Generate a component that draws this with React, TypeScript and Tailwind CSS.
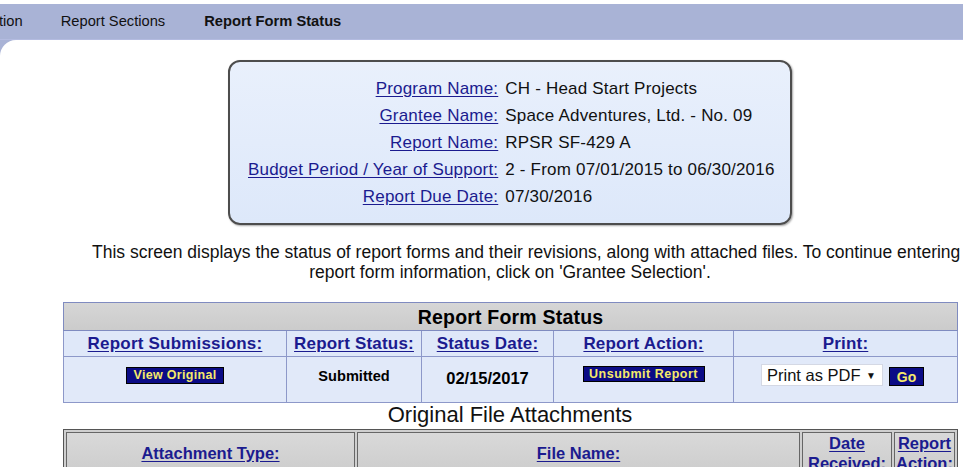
import React from "react";

const linkCls = "text-[#1b1b8f] underline underline-offset-2";

function NavyBtn({ children, className = "" }: { children: React.ReactNode; className?: string }) {
  return (
    <span
      className={
        "flex items-center justify-center bg-[#0b0b86] border border-black text-[#f5e96a] font-bold leading-none " +
        className
      }
    >
      {children}
    </span>
  );
}

export default function App() {
  const info: [string, string][] = [
    ["Program Name:", "CH - Head Start Projects"],
    ["Grantee Name:", "Space Adventures, Ltd. - No. 09"],
    ["Report Name:", "RPSR SF-429 A"],
    ["Budget Period / Year of Support:", "2 - From 07/01/2015 to 06/30/2016"],
    ["Report Due Date:", "07/30/2016"],
  ];

  return (
    <div
      className="w-[963px] h-[467px] overflow-hidden bg-white text-black"
      style={{ fontFamily: '"Liberation Sans", Arial, sans-serif' }}
    >
      <div className="h-[4px] bg-white" />
      <div className="bg-[#a9b3d6]">
        <div className="h-[36px] flex items-center text-[14.7px] text-[#111] border-b border-[#b3bbe0]">
          <span className="ml-[-1px]">tion</span>
          <span className="ml-[38px]">Report Sections</span>
          <span className="ml-[39px] font-bold">Report Form Status</span>
        </div>
        <div className="bg-white rounded-tl-[16px] h-[427px] pt-[20px]">
          {/* Info box */}
          <div className="ml-[228px] w-[564px] h-[165px] border-2 border-[#4d4d4d] rounded-[12px] bg-gradient-to-b from-[#e9f0fc] to-[#dde8fa] shadow-[1px_1px_2px_rgba(0,0,0,0.35)] pt-[13px] pl-[18px]">
            <div className="grid grid-cols-[auto_auto] justify-start gap-x-[7px] text-[17px] tracking-[0.2px]">
              {info.map(([l, v]) => (
                <React.Fragment key={l}>
                  <div className={"h-[27px] leading-[27px] text-right whitespace-nowrap " + linkCls}>{l}</div>
                  <div className="h-[27px] leading-[27px] text-[#111] whitespace-nowrap">{v}</div>
                </React.Fragment>
              ))}
            </div>
          </div>

          {/* Description */}
          <div className="mt-[17px] w-[900px] ml-[60px] text-[17.5px] leading-[20px] text-[#111]">
            <div className="pl-[32px] text-center whitespace-nowrap">
              This screen displays the status of report forms and their revisions, along with attached files. To continue entering
            </div>
            <div className="text-center whitespace-nowrap">report form information, click on 'Grantee Selection'.</div>
          </div>

          {/* Report Form Status table */}
          <table className="mt-[20px] ml-[63px] w-[895px] table-fixed border-collapse border border-[#7f8bc0]">
            <colgroup>
              <col className="w-[223px]" />
              <col className="w-[135px]" />
              <col className="w-[132px]" />
              <col className="w-[180px]" />
              <col />
            </colgroup>
            <tbody>
              <tr className="h-[28px] bg-gradient-to-b from-[#d6d6d6] to-[#cbcbcb]">
                <td colSpan={5} className="text-center font-bold text-[19.5px] tracking-[0.2px] leading-[24px] border border-[#7f8bc0]">
                  Report Form Status
                </td>
              </tr>
              <tr className="h-[26px] bg-[#dfe8f9]">
                {["Report Submissions:", "Report Status:", "Status Date:", "Report Action:", "Print:"].map((h) => (
                  <td
                    key={h}
                    className={"text-center font-bold text-[17px] tracking-[0.2px] leading-[22px] border border-[#8d98c9] whitespace-nowrap " + linkCls}
                  >
                    {h}
                  </td>
                ))}
              </tr>
              <tr className="h-[46px] bg-[#e1e9f9]">
                <td className="text-center border border-[#8d98c9] align-top pt-[10px]">
                  <NavyBtn className="mx-auto w-[98px] h-[17px] text-[12.5px] tracking-[0.3px]">View Original</NavyBtn>
                </td>
                <td className="text-center border border-[#8d98c9] font-bold text-[14.6px] leading-[17px] align-top pt-[11px]">
                  Submitted
                </td>
                <td className="text-center border border-[#8d98c9] font-bold text-[16.5px] leading-[19px] align-top pt-[12px]">
                  02/15/2017
                </td>
                <td className="text-center border border-[#8d98c9] align-top pt-[9px]">
                  <NavyBtn className="mx-auto w-[122px] h-[16px] text-[12.5px] tracking-[0.5px]">Unsubmit Report</NavyBtn>
                </td>
                <td className="border border-[#8d98c9] align-top pt-[7px]">
                  <div className="flex items-start justify-start pl-[27px] gap-[6px]">
                    <div className="w-[122px] h-[22px] bg-white border border-[#d4d8e4] flex items-center justify-between pl-[5px] pr-[6px] text-[16.5px] text-[#111]">
                      <span>Print as PDF</span>
                      <span className="text-[10px]">▼</span>
                    </div>
                    <NavyBtn className="w-[35px] h-[19px] text-[14px] mt-[3px]">Go</NavyBtn>
                  </div>
                </td>
              </tr>
            </tbody>
          </table>

          <div className="w-[963px] pl-[57px] text-center text-[22px] leading-[24px] text-[#111] whitespace-nowrap">
            Original File Attachments
          </div>

          {/* Attachments table */}
          <table className="mt-[2px] ml-[63px] w-[895px] table-fixed border-separate border-spacing-[2px] border border-[#555] bg-[#cfcfcf]">
            <colgroup>
              <col className="w-[289px]" />
              <col className="w-[443px]" />
              <col className="w-[90px]" />
              <col />
            </colgroup>
            <tbody>
              <tr>
                <td className="h-[44px] text-center font-bold text-[16.5px] leading-[20px] bg-gradient-to-b from-[#d9d9d9] to-[#cccccc] border border-[#666] align-top pt-[10px]">
                  <span className={linkCls}>Attachment Type:</span>
                </td>
                <td className="text-center font-bold text-[16.5px] leading-[20px] bg-gradient-to-b from-[#d9d9d9] to-[#cccccc] border border-[#666] align-top pt-[10px]">
                  <span className={linkCls}>File Name:</span>
                </td>
                <td className="text-center font-bold text-[16.5px] leading-[20px] bg-gradient-to-b from-[#d9d9d9] to-[#cccccc] border border-[#666] align-top pt-0">
                  <span className={linkCls}>Date Received:</span>
                </td>
                <td className="text-center font-bold text-[16.5px] leading-[20px] bg-gradient-to-b from-[#d9d9d9] to-[#cccccc] border border-[#666] align-top pt-0">
                  <span className={linkCls}>Report Action:</span>
                </td>
              </tr>
            </tbody>
          </table>
        </div>
      </div>
    </div>
  );
}
